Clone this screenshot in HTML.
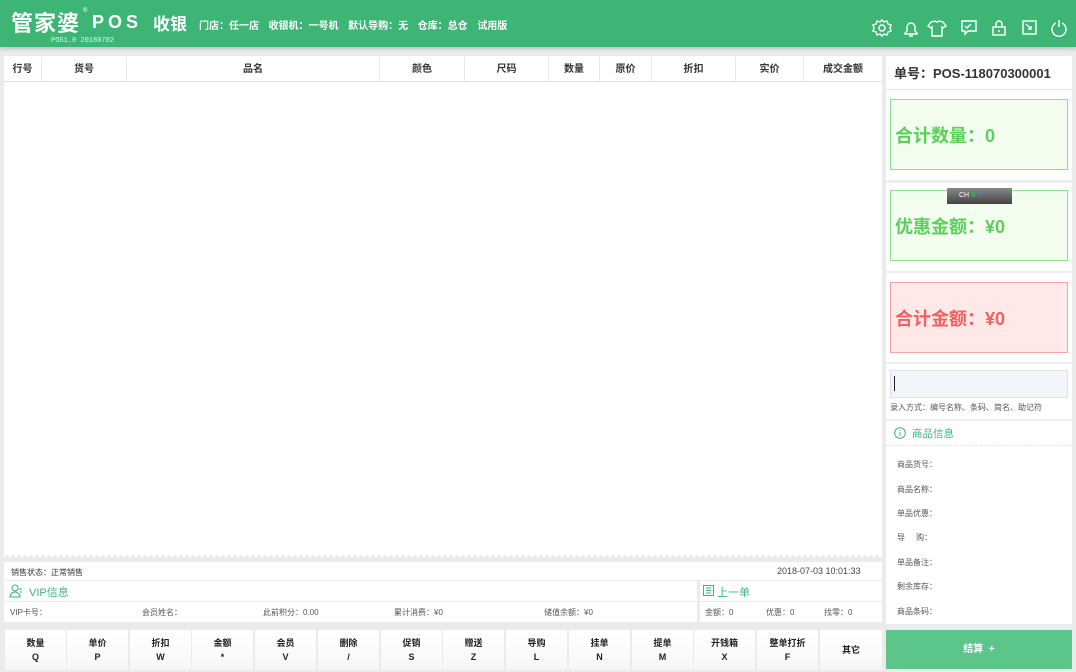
<!DOCTYPE html><html><head><meta charset="utf-8"><style>
*{margin:0;padding:0;box-sizing:border-box}
body{width:1076px;height:672px;background:#ebebeb;font-family:"Liberation Sans","Noto Sans CJK SC",sans-serif;position:relative;overflow:hidden;font-size:9px;color:#333}
.a{position:absolute}
.hdr{left:0;top:0;width:1076px;height:47px;background:#3db575;box-shadow:0 2px 4px rgba(0,0,0,.2)}
.w{background:#fff}
.th{position:absolute;top:57px;height:25px;line-height:25px;text-align:center;font-weight:bold;font-size:10px;border-right:1px solid #e6e6e6;background:#fff;border-bottom:1px solid #e0e0e0}
.box{position:absolute;left:890px;width:178px;height:71px;font-weight:bold;font-size:18px;padding-left:4px;line-height:73px}
.btn{position:absolute;top:630px;width:61px;height:40px;background:linear-gradient(#fff,#f6f6f6);text-align:center;font-weight:bold;font-size:9px;line-height:14px;padding-top:6px;color:#222}
.lbl{position:absolute;left:897px;font-size:8px;color:#555}
</style></head><body>
<div class="a hdr"></div>
<div class="a" style="left:11px;top:6px;color:#fff;font-size:22px;font-weight:bold;letter-spacing:1px">管家婆</div>
<div class="a" style="left:83px;top:8px;color:#fff;font-size:6px">®</div>
<div class="a" style="left:92px;top:12px;color:#fff;font-size:18px;font-weight:bold;letter-spacing:4px">POS</div>
<div class="a" style="left:153px;top:10px;color:#fff;font-size:17px;font-weight:bold">收银</div>
<div class="a" style="left:51px;top:37px;color:#cfe;font-size:7px;font-family:'Liberation Mono',monospace">POS1.0 20180702</div>
<div class="a" style="left:199px;top:17px;color:#fff;font-size:10px;font-weight:bold;word-spacing:2px">门店：任一店&nbsp; 收银机：一号机&nbsp; 默认导购：无&nbsp; 仓库：总仓&nbsp; 试用版</div>
<svg class="a" style="left:872px;top:18px" width="200" height="20" fill="none" stroke="#fff" stroke-width="1.4">
<circle cx="10" cy="10" r="3"/><path d="M10 2l2 2 3-1 1 3 3 1-1 3 1 3-3 1-1 3-3-1-2 2-2-2-3 1-1-3-3-1 1-3-1-3 3-1 1-3 3 1z"/>
<path d="M33 16v-1l2-2v-4a4 4 0 0 1 8 0v4l2 2v1z M37 18h4"/>
<path d="M59 4l4-1q2 2 4 0l4 1 3 4-3 2-1-1v9h-10v-9l-1 1-3-2z"/>
<path d="M90 3h14v10h-8l-3 3v-3h-3z M93 8l2 2 4-4"/>
<rect x="121" y="9" width="12" height="8"/><path d="M124 9v-3a3 3 0 0 1 6 0v3 M127 12v2"/>
<rect x="151" y="3" width="13" height="13"/><path d="M154 6l5 5 M159 8v3h-3"/>
<path d="M184 5a7 7 0 1 0 6 0 M187 2v7"/>
</svg>
<div class="a w" style="left:4px;top:56px;width:878px;height:500px"></div>
<div class="th" style="left:4px;width:38px">行号</div>
<div class="th" style="left:42px;width:85px">货号</div>
<div class="th" style="left:127px;width:253px">品名</div>
<div class="th" style="left:380px;width:85px">颜色</div>
<div class="th" style="left:465px;width:84px">尺码</div>
<div class="th" style="left:549px;width:51px">数量</div>
<div class="th" style="left:600px;width:52px">原价</div>
<div class="th" style="left:652px;width:84px">折扣</div>
<div class="th" style="left:736px;width:68px">实价</div>
<div class="th" style="left:804px;width:78px;border-right:0">成交金额</div>
<svg class="a" style="left:4px;top:552px" width="878" height="6"><path d="M0 6 L0 0 H878 V6" fill="#fff"/><pattern id="p" width="6" height="6" patternUnits="userSpaceOnUse"><path d="M0 6l3-4 3 4z" fill="#ebebeb"/></pattern><rect width="878" height="6" fill="url(#p)"/></svg>
<div class="a w" style="left:4px;top:562px;width:878px;height:18px"></div>
<div class="a" style="left:11px;top:567px;font-size:8px">销售状态：正常销售</div>
<div class="a" style="left:777px;top:566px;font-size:9px;color:#444">2018-07-03 10:01:33</div>
<div class="a w" style="left:4px;top:581px;width:693px;height:20px"></div>
<div class="a w" style="left:4px;top:602px;width:693px;height:20px"></div>
<div class="a w" style="left:700px;top:581px;width:182px;height:20px"></div>
<div class="a w" style="left:700px;top:602px;width:182px;height:20px"></div>
<svg class="a" style="left:9px;top:584px" width="14" height="14" fill="none" stroke="#3db575" stroke-width="1.1"><circle cx="6" cy="4" r="3"/><path d="M1 13a5 5 0 0 1 10 0z M10 5h3 M11 8h2"/></svg>
<div class="a" style="left:29px;top:584px;font-size:11px;color:#3db575">VIP信息</div>
<div class="a" style="left:10px;top:607px;font-size:8px;color:#555">VIP卡号：</div>
<div class="a" style="left:142px;top:607px;font-size:8px;color:#555">会员姓名：</div>
<div class="a" style="left:263px;top:607px;font-size:8px;color:#555">此前积分：0.00</div>
<div class="a" style="left:394px;top:607px;font-size:8px;color:#555">累计消费：¥0</div>
<div class="a" style="left:544px;top:607px;font-size:8px;color:#555">储值余额：¥0</div>
<svg class="a" style="left:703px;top:585px" width="11" height="11" fill="none" stroke="#3db575"><rect x="0.5" y="0.5" width="10" height="10"/><path d="M3 3h5M3 5.5h5M3 8h5"/></svg>
<div class="a" style="left:717px;top:584px;font-size:11px;color:#3db575">上一单</div>
<div class="a" style="left:705px;top:607px;font-size:8px;color:#555">金额：0</div>
<div class="a" style="left:766px;top:607px;font-size:8px;color:#555">优惠：0</div>
<div class="a" style="left:824px;top:607px;font-size:8px;color:#555">找零：0</div>
<div class="btn" style="left:5px">数量<br>Q</div>
<div class="btn" style="left:67px">单价<br>P</div>
<div class="btn" style="left:130px">折扣<br>W</div>
<div class="btn" style="left:192px">金额<br>*</div>
<div class="btn" style="left:255px">会员<br>V</div>
<div class="btn" style="left:318px">删除<br>/</div>
<div class="btn" style="left:381px">促销<br>S</div>
<div class="btn" style="left:443px">赠送<br>Z</div>
<div class="btn" style="left:506px">导购<br>L</div>
<div class="btn" style="left:569px">挂单<br>N</div>
<div class="btn" style="left:632px">提单<br>M</div>
<div class="btn" style="left:694px">开钱箱<br>X</div>
<div class="btn" style="left:757px">整单打折<br>F</div>
<div class="btn" style="left:820px;width:62px;line-height:40px;padding-top:0">其它</div>
<div class="a w" style="left:886px;top:56px;width:186px;height:568px"></div>
<div class="a" style="left:894px;top:63px;font-size:13px;font-weight:bold;color:#333">单号：POS-118070300001</div>
<div class="a" style="left:886px;top:89px;width:186px;height:1px;background:#e6e6e6"></div>
<div class="box" style="top:99px;background:#f2fdf0;border:1px solid #8fe08c;color:#5bcf5a">合计数量：0</div>
<div class="a" style="left:886px;top:180px;width:186px;height:3px;background:#eee"></div>
<div class="box" style="top:190px;background:#f2fdf0;border:1px solid #8fe08c;color:#5bcf5a">优惠金额：¥0</div>
<div class="a" style="left:947px;top:188px;width:65px;height:16px;background:linear-gradient(#888,#444);color:#fff;font-size:7px;line-height:16px;padding-left:12px">CH <span style="color:#4c4">S</span> <span style="color:#48f">?</span></div>
<div class="a" style="left:886px;top:271px;width:186px;height:2px;background:#eee"></div>
<div class="box" style="top:282px;background:#fee8e8;border:1px solid #f5a3a3;color:#f26060">合计金额：¥0</div>
<div class="a" style="left:886px;top:362px;width:186px;height:2px;background:#eee"></div>
<div class="a" style="left:890px;top:370px;width:178px;height:28px;background:#f4f5fa;border:1px solid #dde"></div>
<div class="a" style="left:894px;top:376px;width:1px;height:15px;background:#222"></div>
<div class="a" style="left:890px;top:402px;font-size:8px;color:#555">录入方式：编号名称、条码、简名、助记符</div>
<div class="a" style="left:886px;top:419px;width:186px;height:2px;background:#eee"></div>
<svg class="a" style="left:894px;top:427px" width="12" height="12" fill="none" stroke="#3db575"><circle cx="6" cy="6" r="5.3"/><path d="M6 5v4M6 3v1"/></svg>
<div class="a" style="left:912px;top:426px;font-size:10.5px;color:#3db575">商品信息</div>
<div class="a" style="left:886px;top:445px;width:186px;border-top:1px dashed #e5e5e5"></div>
<div class="lbl" style="top:459px">商品货号：</div>
<div class="lbl" style="top:484px">商品名称：</div>
<div class="lbl" style="top:508px">单品优惠：</div>
<div class="lbl" style="top:532px">导&nbsp;&nbsp;&nbsp;&nbsp;&nbsp;购：</div>
<div class="lbl" style="top:557px">单品备注：</div>
<div class="lbl" style="top:581px">剩余库存：</div>
<div class="lbl" style="top:606px">商品条码：</div>
<div class="a" style="left:886px;top:630px;width:186px;height:39px;background:#5cc68a;color:#fff;font-weight:bold;font-size:10px;line-height:39px;text-align:center">结算&nbsp; +</div>
</body></html>
